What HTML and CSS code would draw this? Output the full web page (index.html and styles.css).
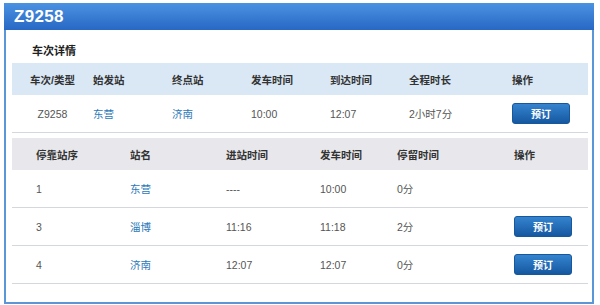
FILE: index.html
```html
<!DOCTYPE html>
<html lang="zh-CN">
<head>
	<meta charset="UTF-8"/>
	<title>Z9258 车次详情</title>
	<link rel="stylesheet" href="styles.css">
</head>
<body>

<div class="panel">
	<div class="panel-title">Z9258</div>

	<div class="panel-body">
		<div class="section-title">车次详情</div>

		<!-- train summary -->
		<table class="grid summary">
			<colgroup>
				<col style="width: 80px"><col style="width: 79px"><col style="width: 79px">
				<col style="width: 79px"><col style="width: 79px"><col style="width: 103px"><col>
			</colgroup>
			<thead>
			<tr>
				<th class="center">车次/类型</th>
				<th>始发站</th>
				<th>终点站</th>
				<th>发车时间</th>
				<th>到达时间</th>
				<th>全程时长</th>
				<th>操作</th>
			</tr>
			</thead>
			<tbody>
			<tr>
				<td class="center">Z9258</td>
				<td><a href="#">东营</a></td>
				<td><a href="#">济南</a></td>
				<td>10:00</td>
				<td>12:07</td>
				<td>2小时7分</td>
				<td><button class="btn-book">预订</button></td>
			</tr>
			</tbody>
		</table>

		<!-- stops -->
		<table class="grid stops">
			<colgroup>
				<col style="width: 117px"><col style="width: 96px"><col style="width: 94px">
				<col style="width: 77px"><col style="width: 117px"><col>
			</colgroup>
			<thead>
			<tr>
				<th class="first">停靠站序</th>
				<th>站名</th>
				<th>进站时间</th>
				<th>发车时间</th>
				<th>停留时间</th>
				<th>操作</th>
			</tr>
			</thead>
			<tbody>
			<tr>
				<td class="first">1</td>
				<td><a href="#">东营</a></td>
				<td>----</td>
				<td>10:00</td>
				<td>0分</td>
				<td></td>
			</tr>
			<tr>
				<td class="first">3</td>
				<td><a href="#">淄博</a></td>
				<td>11:16</td>
				<td>11:18</td>
				<td>2分</td>
				<td><button class="btn-book">预订</button></td>
			</tr>
			<tr>
				<td class="first">4</td>
				<td><a href="#">济南</a></td>
				<td>12:07</td>
				<td>12:07</td>
				<td>0分</td>
				<td><button class="btn-book">预订</button></td>
			</tr>
			</tbody>
		</table>
	</div>
</div>

</body>
</html>
```

FILE: styles.css
```css
body {
    margin: 0;
    padding: 3px 0 0 4px;
    background: #fff;
    font-family: "Liberation Sans", "Noto Sans CJK SC", sans-serif;
    color: #555;
}

.panel {
    width: 586px;
    height: 299px;
    border: 2px solid #5a97d6;
    border-top: none;
}

.panel-title {
    height: 27px;
    line-height: 27px;
    padding-left: 10px;
    margin: 0 -2px;
    background: linear-gradient(#4b92e2, #2768c4);
    color: #fff;
    font-size: 17px;
    font-weight: bold;
    letter-spacing: 0.3px;
}

.panel-body {
    padding: 0 4px 0 6px;
}

.section-title {
    padding: 14px 0 0 20px;
    height: 19px;
    line-height: 14px;
    font-size: 11px;
    font-weight: bold;
    color: #222;
}

.grid {
    width: 100%;
    border-collapse: collapse;
    table-layout: fixed;
    font-size: 10.5px;
}

.grid th {
    height: 32px;
    padding: 0 0 0 1px;
    text-align: left;
    font-weight: bold;
    color: #333;
}

.grid td {
    height: 37px;
    padding: 0 0 0 1px;
    border-bottom: 1px solid #d4d8dc;
}

.grid .center {
    text-align: center;
}

.summary th {
    background: #dae8f6;
}

.stops {
    margin-top: 5px;
}

.stops th {
    background: #e8e8ec;
}

.stops .first {
    padding-left: 24px;
}

.grid a {
    color: #2b78b8;
    text-decoration: none;
}

.btn-book {
    width: 58px;
    height: 21px;
    padding: 0;
    border: 1px solid #17589c;
    border-radius: 3px;
    background: linear-gradient(#3583cf, #1558a0);
    color: #fff;
    font-family: inherit;
    font-size: 10px;
    font-weight: bold;
    cursor: pointer;
}
```
